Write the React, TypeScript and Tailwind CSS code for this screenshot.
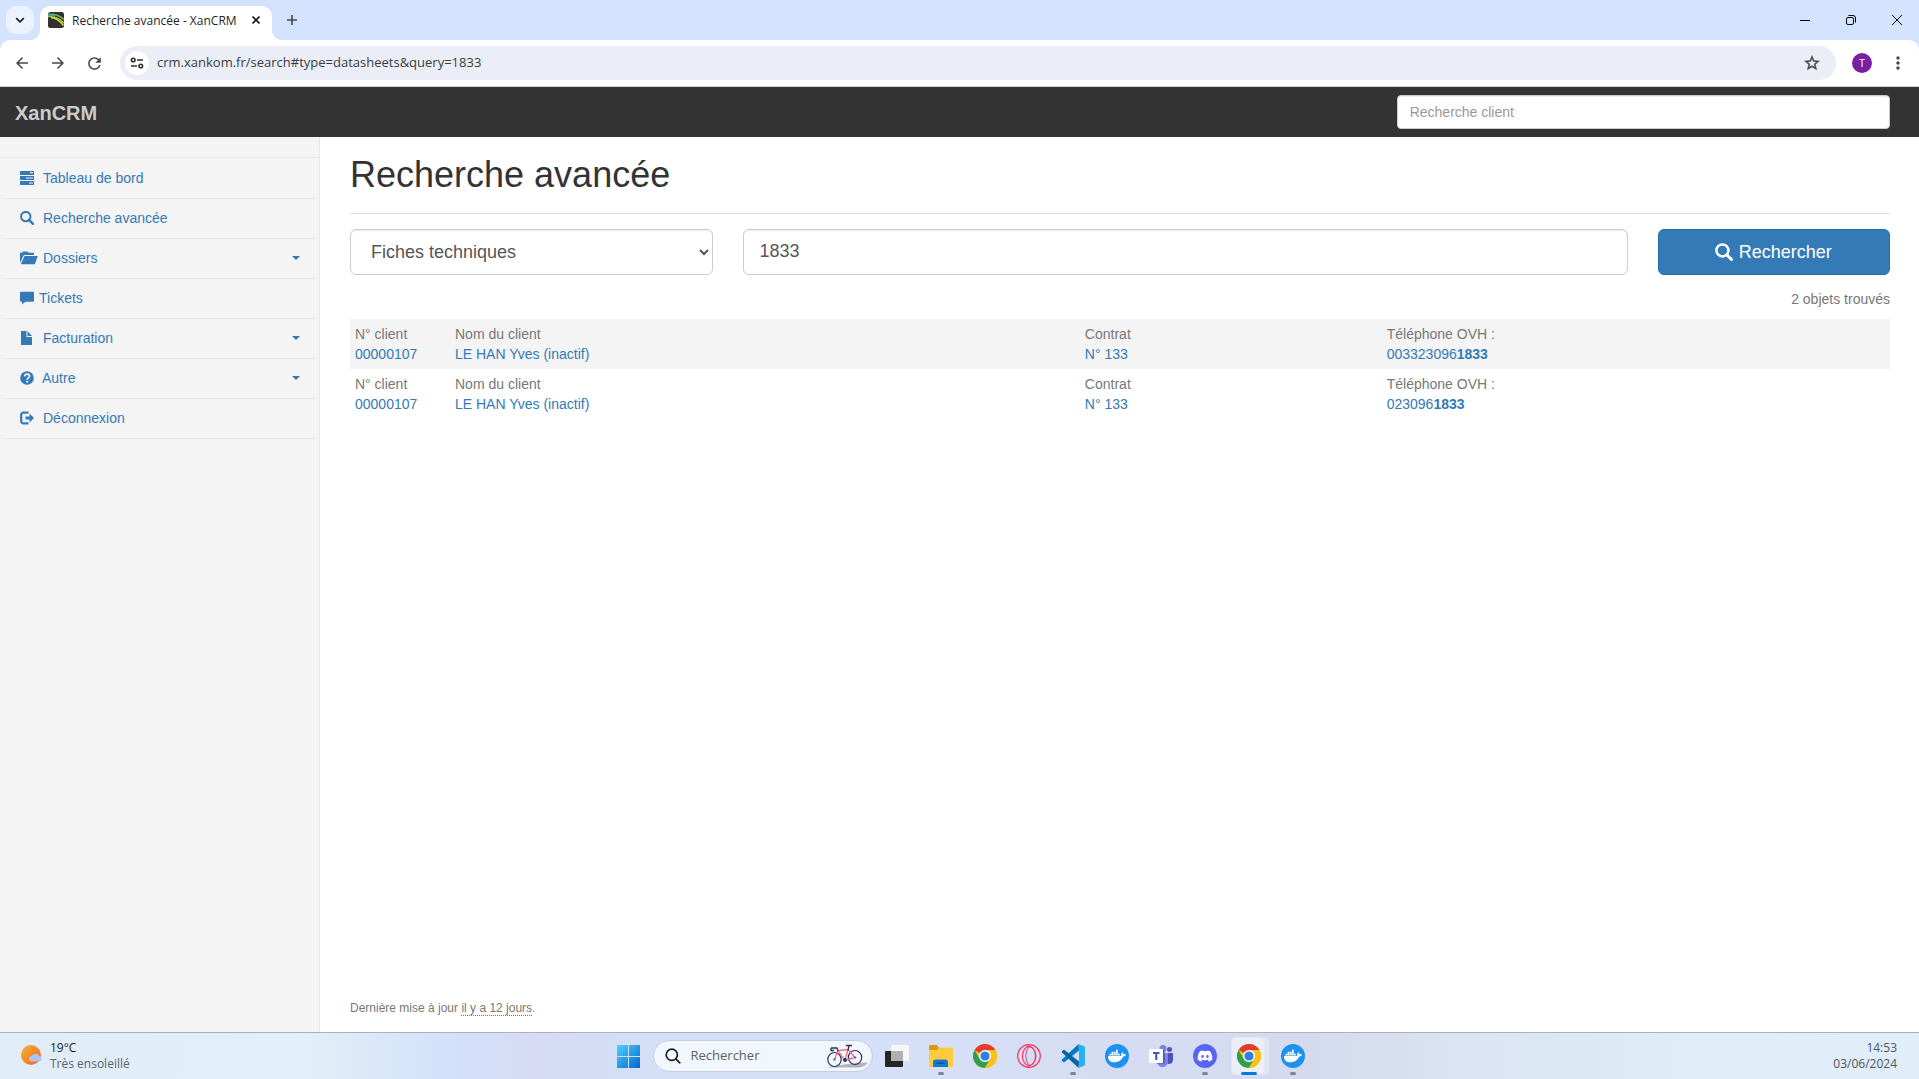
import { useState, type ReactNode } from "react";
import { FaDiscord, FaDocker } from "react-icons/fa";
import {
  MdArrowBack,
  MdArrowForward,
  MdRefresh,
  MdStarOutline,
  MdMoreVert,
} from "react-icons/md";

/* ---------- Browser chrome ---------- */

function Favicon() {
  return (
    <svg viewBox="0 0 16 16" className="size-4 shrink-0" aria-hidden="true">
      <rect width="16" height="16" rx="2.5" fill="#2f3133" />
      <g fill="none" strokeWidth="1.5">
        <path d="M0 2.5C5 1.5 11 3 16 7.5" stroke="#76b043" />
        <path d="M0 4.5C6 4 11 6 16 11" stroke="#a5c63b" />
        <path d="M3 5.5C8 6 12 9 15.5 13.5" stroke="#d8df2b" />
        <path d="M0 3.5C3 3 5 3.2 7 4" stroke="#4a9bb0" />
      </g>
    </svg>
  );
}

function TabStrip() {
  return (
    <div className="flex h-10 items-end bg-[#d3e3fd]">
      <button
        aria-label="Rechercher dans les onglets"
        className="mb-1.5 ml-1.5 flex size-7 items-center justify-center rounded-[10px] bg-[#ebf2fd]"
      >
        <svg viewBox="0 0 10 10" className="size-2.5" fill="none" stroke="#1f1f1f" strokeWidth="1.8">
          <path d="M1.2 3.2 5 6.8 8.8 3.2" />
        </svg>
      </button>
      <div className="relative ml-1.5 flex h-[34px] w-[232px] items-center rounded-t-[10px] bg-white pb-3 pl-2 pt-1.5">
        <span className="absolute -left-2.5 bottom-0 size-2.5 bg-[radial-gradient(circle_at_0_0,transparent_10px,white_10px)]" />
        <span className="absolute -right-2.5 bottom-0 size-2.5 bg-[radial-gradient(circle_at_100%_0,transparent_10px,white_10px)]" />
        <Favicon />
        <span className="ml-2 flex-1 whitespace-nowrap pt-0.5 text-[12px] text-[#1f1f1f]">
          Recherche avancée - XanCRM
        </span>
        <button aria-label="Fermer l'onglet" className="flex size-8 items-center justify-center">
          <svg viewBox="0 0 8 8" className="size-2" stroke="#1f1f1f" strokeWidth="1.6">
            <path d="M.5.5l7 7M7.5.5l-7 7" />
          </svg>
        </button>
      </div>
      <button aria-label="Nouvel onglet" className="mb-1.5 ml-1.5 flex size-7 items-center justify-center">
        <svg viewBox="0 0 10 10" className="size-2.5" stroke="#474747" strokeWidth="1.6">
          <path d="M5 0v10M0 5h10" />
        </svg>
      </button>
      <div className="ml-auto flex h-10 -mr-px">
        <button aria-label="Réduire" className="flex w-[46px] items-center justify-center">
          <svg viewBox="0 0 10 10" className="size-2.5" stroke="#000">
            <path d="M0 5.5h10" />
          </svg>
        </button>
        <button aria-label="Restaurer" className="flex w-[46px] items-center justify-center">
          <svg viewBox="0 0 10 10" className="size-2.5" fill="none" stroke="#000">
            <rect x=".5" y="2.5" width="7" height="7" rx="1.5" />
            <path d="M2.5.5H7A2.5 2.5 0 0 1 9.500 3v4.500" />
          </svg>
        </button>
        <button aria-label="Fermer" className="flex w-[46px] items-center justify-center">
          <svg viewBox="0 0 10 10" className="size-2.5" stroke="#000">
            <path d="M0 0l10 10M10 0L0 10" />
          </svg>
        </button>
      </div>
    </div>
  );
}

function ToolButton({ label, children }: { label: string; children: ReactNode }) {
  return (
    <button aria-label={label} className="flex size-9 shrink-0 items-center justify-center text-[#474747]">
      {children}
    </button>
  );
}

function Toolbar() {
  return (
    <div className="bg-[#d3e3fd]">
      <div className="flex h-[47px] items-center rounded-t-[10px] border-b border-[#d5d5d5] bg-white pl-1 pr-[3px]">
        <ToolButton label="Précédent">
          <MdArrowBack className="size-[18px]" />
        </ToolButton>
        <ToolButton label="Suivant">
          <MdArrowForward className="size-[18px]" />
        </ToolButton>
        <ToolButton label="Actualiser">
          <MdRefresh className="size-[19px]" />
        </ToolButton>
        <div className="mx-2 flex h-[34px] flex-1 items-center rounded-full bg-[#ebeef7] pl-[5px] pr-[15px]">
          <button
            aria-label="Informations sur le site"
            className="flex size-6 shrink-0 items-center justify-center rounded-full bg-white"
          >
            <svg viewBox="0 0 14 12" className="h-3 w-3.5" fill="none" stroke="#303030" strokeWidth="1.6">
              <circle cx="3.200" cy="3" r="1.800" />
              <path d="M7 3h6M1 9h6" />
              <circle cx="10.800" cy="9" r="1.800" />
            </svg>
          </button>
          <input
            aria-label="Adresse"
            className="ml-2 min-w-0 flex-1 bg-transparent text-[13px] text-[#3a3c40] outline-none"
            defaultValue="crm.xankom.fr/search#type=datasheets&query=1833"
          />
          <button aria-label="Ajouter aux favoris" className="text-[#474747]">
            <MdStarOutline className="size-[18px]" stroke="currentColor" strokeWidth="0.6" />
          </button>
        </div>
        <ToolButton label="Profil">
          <span className="flex size-5 items-center justify-center rounded-full bg-[#7b1fa2] text-[10px] text-white">
            T
          </span>
        </ToolButton>
        <ToolButton label="Menu">
          <MdMoreVert className="size-5" />
        </ToolButton>
      </div>
    </div>
  );
}

/* ---------- Icons of the application ---------- */

function Glyph({ children, wide = false }: { children: ReactNode; wide?: boolean }) {
  return (
    <svg
      viewBox={wide ? "0 0 18 14" : "0 0 14 14"}
      className={wide ? "h-3.5 w-[18px] shrink-0" : "h-3.5 w-3.5 shrink-0"}
      fill="currentColor"
      aria-hidden="true"
    >
      {children}
    </svg>
  );
}

const serverIcon = (
  <Glyph>
    <path
      fillRule="evenodd"
      d="M0 0h14v4H0zM10 1v1.200h3V1zM0 5h14v4H0zM6 6.400v1.200h7V6.400zM0 10h14v4H0zM9 11.400v1.200h4v-1.200z"
    />
  </Glyph>
);
const searchIcon = (
  <Glyph>
    <circle cx="5.800" cy="5.600" r="4.700" fill="none" stroke="currentColor" strokeWidth="2" />
    <path d="M9 8.800l4 4" stroke="currentColor" strokeWidth="2.400" strokeLinecap="round" />
  </Glyph>
);
const folderIcon = (
  <Glyph wide>
    <path d="M0 12V1.800h2L3 .5h4.500l1 1.300H14V4H4.200L3.200 5z" />
    <path d="M4.500 5H17.800l-3 8.300H.8z" />
  </Glyph>
);
const ticketIcon = (
  <Glyph>
    <path d="M1 .8h12a1 1 0 0 1 1 1v8a1 1 0 0 1-1 1H5.500L2.200 13.500V10.800H1a1 1 0 0 1-1-1v-8a1 1 0 0 1 1-1z" />
  </Glyph>
);
const fileIcon = (
  <Glyph>
    <path d="M1 0h5.500v6H12v8H1zM7.500 0 12 5H7.500z" />
  </Glyph>
);
const helpIcon = (
  <Glyph>
    <circle cx="7" cy="7" r="6.800" />
    <path d="M4.700 5.400C4.800 3.800 5.900 3.200 7.100 3.200c1.400 0 2.400.8 2.400 2 0 1.700-2.300 1.700-2.300 3.600" fill="none" stroke="#f4f4f4" strokeWidth="1.700" />
    <path d="M6.200 9.800h2v1.700h-2z" fill="#f4f4f4" />
  </Glyph>
);
const logoutIcon = (
  <Glyph>
    <path d="M8.500 1.700H3.300A2 2 0 0 0 1.200 3.700v6.600a2 2 0 0 0 2.100 2h5.200" fill="none" stroke="currentColor" strokeWidth="2.200" />
    <path d="M5.500 5.400h4V2.600L14 7l-4.500 4.400V8.600h-4z" />
  </Glyph>
);

/* ---------- Application ---------- */

function Navbar() {
  return (
    <header className="flex h-[50px] shrink-0 items-center bg-[#333333]">
      <div className="w-80 shrink-0 pl-[15px] pt-0.5">
        <a href="#accueil" className="block text-[20px] font-bold leading-5 text-[#cccccc]">
          XanCRM
        </a>
      </div>
      <div className="grid flex-1 grid-cols-3 gap-[30px] pl-[30px] pr-[29px]">
        <input
          aria-label="Recherche client"
          placeholder="Recherche client"
          className="col-start-3 h-[34px] min-w-0 rounded border border-[#cccccc] bg-white px-3 text-[14px] text-[#555555] shadow-[inset_0_1px_1px_rgba(0,0,0,0.075)] placeholder:text-[#999999]"
        />
      </div>
    </header>
  );
}

type MenuItem = { label: string; icon: ReactNode; gap: string; caret?: boolean };

const menu: MenuItem[] = [
  { label: "Tableau de bord", icon: serverIcon, gap: "gap-[9px]" },
  { label: "Recherche avancée", icon: searchIcon, gap: "gap-[9px]" },
  { label: "Dossiers", icon: folderIcon, gap: "gap-[5px]", caret: true },
  { label: "Tickets", icon: ticketIcon, gap: "gap-[5px]" },
  { label: "Facturation", icon: fileIcon, gap: "gap-[9px]", caret: true },
  { label: "Autre", icon: helpIcon, gap: "gap-2", caret: true },
  { label: "Déconnexion", icon: logoutIcon, gap: "gap-[9px]" },
];

function Sidebar() {
  return (
    <nav className="w-80 shrink-0 border-r border-[#e7e7e7] bg-[#f4f4f4] pt-5">
      <ul className="border-t border-[#e7e7e7] pt-px">
        {menu.map((item) => (
          <li key={item.label}>
            <a
              href={"#" + item.label}
              className={
                "flex h-10 items-center rounded-b border-b border-[#e7e7e7] pb-0.5 pl-5 pr-[19px] text-[14px] leading-5 text-[#337ab7] " +
                item.gap
              }
            >
              {item.icon}
              <span>{item.label}</span>
              {item.caret && (
                <svg viewBox="0 0 8 4" className="ml-auto h-1 w-2" fill="currentColor" aria-hidden="true">
                  <path d="M0 0h8L4 4z" />
                </svg>
              )}
            </a>
          </li>
        ))}
      </ul>
    </nav>
  );
}

type Result = { client: string; name: string; contract: string; prefix: string; match: string };

const results: Result[] = [
  { client: "00000107", name: "LE HAN Yves (inactif)", contract: "N° 133", prefix: "003323096", match: "1833" },
  { client: "00000107", name: "LE HAN Yves (inactif)", contract: "N° 133", prefix: "023096", match: "1833" },
];

function Cell({ label, className = "", children }: { label: string; className?: string; children: ReactNode }) {
  return (
    <td className={"p-[5px] align-top " + className}>
      <span className="block">{label}</span>
      <a href="#fiche" className="block text-[#337ab7]">
        {children}
      </a>
    </td>
  );
}

function SearchPage() {
  const [type, setType] = useState("Fiches techniques");
  const [query, setQuery] = useState("1833");
  return (
    <main className="flex flex-1 flex-col pb-3.5 pl-[30px] pr-[29px] text-[14px] leading-5 text-[#777777]">
      <h1 className="mb-[15px] border-b border-[#dddddd] pb-[18px] pt-[18px] text-[36px] leading-10 text-[#333333]">
        Recherche avancée
      </h1>
      <form className="grid grid-cols-12 gap-[30px]" onSubmit={(e) => e.preventDefault()}>
        <select
          aria-label="Type d'objet"
          value={type}
          onChange={(e) => setType(e.target.value)}
          className="col-span-3 h-[46px] rounded-md border border-[#cccccc] bg-white pl-4 text-[18px] text-[#555555] shadow-[inset_0_1px_1px_rgba(0,0,0,0.075)]"
        >
          <option>Fiches techniques</option>
        </select>
        <input
          aria-label="Recherche"
          value={query}
          onChange={(e) => setQuery(e.target.value)}
          className="col-span-7 h-[46px] min-w-0 rounded-md border border-[#cccccc] bg-white px-4 pb-0.5 text-[18px] text-[#555555] shadow-[inset_0_1px_1px_rgba(0,0,0,0.075)]"
        />
        <button className="col-span-2 flex h-[46px] items-center justify-center gap-1.5 rounded-md border border-[#2e6da4] bg-[#337ab7] pr-0.5 text-[18px] text-white">
          <svg viewBox="0 0 18 18" className="size-[18px]" fill="none" stroke="currentColor" aria-hidden="true">
            <circle cx="7.400" cy="7.400" r="6" strokeWidth="2.500" />
            <path d="M12 12l4.500 4.500" strokeWidth="3" strokeLinecap="round" />
          </svg>
          Rechercher
        </button>
      </form>
      <p className="pb-2.5 pt-3.5 text-right">2 objets trouvés</p>
      <table className="w-full table-fixed">
        <tbody>
          {results.map((r) => (
            <tr key={r.prefix} className="odd:bg-[#f4f4f4]">
              <Cell label="N° client" className="w-[100px]">
                {r.client}
              </Cell>
              <Cell label="Nom du client" className="w-[40.9%]">
                {r.name}
              </Cell>
              <Cell label="Contrat" className="w-[19.6%]">
                {r.contract}
              </Cell>
              <Cell label="Téléphone OVH :">
                {r.prefix}
                <strong>{r.match}</strong>
              </Cell>
            </tr>
          ))}
        </tbody>
      </table>
      <p className="mt-auto text-[12px]">
        Dernière mise à jour{" "}
        <abbr title="22/05/2024" className="border-b border-dotted border-[#777777] no-underline">
          il y a 12 jours
        </abbr>
        .
      </p>
    </main>
  );
}

/* ---------- Windows task bar ---------- */

function ChromeLogo() {
  return (
    <svg viewBox="0 0 24 24" className="size-6" aria-hidden="true">
      <circle cx="12" cy="12" r="12" fill="#fbc116" />
      <path d="M12 12 1.600 6A12 12 0 0 1 22.400 6H12z" fill="#e33b2e" />
      <path d="M1.600 6A12 12 0 0 0 12 24l5.200-9L12 12 6.800 15z" fill="#2da04d" />
      <path d="M12 6h10.400A12 12 0 0 1 12 24l5.200-9z" fill="#fbc116" />
      <circle cx="12" cy="12" r="6" fill="#fff" />
      <circle cx="12" cy="12" r="4.600" fill="#2f7de9" />
    </svg>
  );
}

function DockerLogo() {
  return (
    <span className="flex size-6 items-center justify-center rounded-full bg-[#1d91ee] text-white">
      <FaDocker className="h-[18px] w-[18px]" />
    </span>
  );
}

const taskViewLogo = (
  <svg viewBox="0 0 24 24" className="size-6" aria-hidden="true">
    <rect x="0" y="7" width="18" height="16" rx="1" fill="#252525" />
    <rect x="6" y="1" width="18" height="16" rx="1" fill="#f7f7f7" />
    <path d="M6 7h12v10H6z" fill="#aeb0b2" />
  </svg>
);
const explorerLogo = (
  <svg viewBox="0 0 24 24" className="size-6" aria-hidden="true">
    <path d="M0 2.500A1.500 1.500 0 0 1 1.500 1H8l2 3v4H0z" fill="#d9990f" />
    <path d="M0 6h8l2.200-2.500H23a1 1 0 0 1 1 1V22a1 1 0 0 1-1 1H1a1 1 0 0 1-1-1z" fill="#fdcb3e" />
    <path d="M4 23v-5a2.500 2.500 0 0 1 2.500-2.500h10A2.500 2.500 0 0 1 19 18v5z" fill="#1579cf" />
    <path d="M7.500 18.500h8v1.500h-8z" fill="#0b5499" />
  </svg>
);
const operaLogo = (
  <svg viewBox="0 0 24 24" className="size-6" fill="none" stroke="#f7315f" aria-hidden="true">
    <circle cx="12" cy="12" r="11.300" strokeWidth="1.200" />
    <ellipse cx="12" cy="12" rx="6.500" ry="9.600" strokeWidth="1.200" />
    <path d="M13 2.500C7.500 5 7.500 19 13 21.500M10 1.500c12 2 12 19 0 21" strokeWidth=".9" />
  </svg>
);
const codeLogo = (
  <svg viewBox="0 0 24 24" className="size-6" aria-hidden="true">
    <path d="M17.500 0 1 15.500a1 1 0 0 0 0 1.300l1.300 1.300a1 1 0 0 0 1.200 0L18 6.500z" fill="#0079c4" />
    <path d="M17.500 24 1 8.500a1 1 0 0 1 0-1.300l1.300-1.300a1 1 0 0 1 1.200 0L18 17.500z" fill="#0065a9" />
    <path d="M17.300 0 23 2.200a1.500 1.500 0 0 1 1 1.400v16.800a1.500 1.500 0 0 1-1 1.400L17.300 24c.4-.3.700-.8.700-1.500v-21c0-.7-.3-1.200-.7-1.500z" fill="#29b0f0" />
  </svg>
);
const teamsLogo = (
  <svg viewBox="0 0 24 24" className="size-6" aria-hidden="true">
    <circle cx="20.500" cy="5.500" r="2.500" fill="#4b53bc" />
    <path d="M17 9h7v7.500a4 4 0 0 1-7 2z" fill="#4b53bc" />
    <circle cx="14" cy="4.500" r="3.500" fill="#7b83eb" />
    <path d="M8 9h11v8.500a5.500 5.500 0 0 1-11 0z" fill="#7b83eb" />
    <path d="M8 6h7.500v13.500H8z" fill="#4a51b0" />
    <path d="M0 5h14v14H0z" fill="#fff" />
    <path d="M4 8h6.500v2H8.300v6H6.200v-6H4z" fill="#4b53bc" />
  </svg>
);
const discordLogo = (
  <span className="flex size-6 items-center justify-center rounded-full bg-[#5865f2] text-white">
    <FaDiscord className="size-4" />
  </span>
);

const apps: { name: string; logo: ReactNode; open?: boolean; active?: boolean }[] = [
  { name: "Vue des tâches", logo: taskViewLogo },
  { name: "Explorateur de fichiers", logo: explorerLogo, open: true },
  { name: "Google Chrome", logo: <ChromeLogo /> },
  { name: "Opera GX", logo: operaLogo },
  { name: "Visual Studio Code", logo: codeLogo, open: true },
  { name: "Docker", logo: <DockerLogo /> },
  { name: "Microsoft Teams", logo: teamsLogo },
  { name: "Discord", logo: discordLogo, open: true },
  { name: "Google Chrome (actif)", logo: <ChromeLogo />, active: true },
  { name: "Docker Desktop", logo: <DockerLogo />, open: true },
];

function Bicycle() {
  return (
    <svg viewBox="0 0 42 24" className="h-6 w-[42px] shrink-0" fill="none" aria-hidden="true">
      <path d="M0 23.500c12-2 28-5 42-5-2 3-6 5-11 5z" fill="#b4b3b6" />
      <g stroke="#2c3060" strokeWidth="1.200">
        <ellipse cx="8.500" cy="15.500" rx="6.700" ry="7" />
        <ellipse cx="29" cy="13.500" rx="6.700" ry="7" />
      </g>
      <path d="M8.500 15.500 12 6.500l10-1-3 10M12 6.500l6.500 9.500M22 5.500l7 8-9 2.500" stroke="#ef6a7c" strokeWidth="1.300" />
      <path d="M20 1.500h6M23 2l-1 4M5 4h6l1 3M5 4v2.500h3" stroke="#2c3060" strokeWidth="1.300" />
      <circle cx="19" cy="16" r="1.900" fill="#2c3060" />
      <circle cx="8.500" cy="15.500" r="1.300" fill="#777a88" />
      <circle cx="29" cy="13.500" r="1.300" fill="#777a88" />
    </svg>
  );
}

function WeatherIcon() {
  return (
    <svg viewBox="0 0 22 22" className="size-[22px] shrink-0" aria-hidden="true">
      <defs>
        <linearGradient id="sun" x1="0" y1="0" x2="1" y2="1">
          <stop offset="0" stopColor="#efb135" />
          <stop offset="1" stopColor="#f5661c" />
        </linearGradient>
      </defs>
      <circle cx="10" cy="10" r="10" fill="url(#sun)" />
      <path d="M10.500 16.500a2.600 2.600 0 0 1 .3-5.200 4 4 0 0 1 7.400-.3 2.900 2.900 0 0 1 .6 5.500z" fill="#a9c6f5" />
    </svg>
  );
}

function TaskBar() {
  return (
    <footer className="grid h-[47px] shrink-0 grid-cols-[1fr_auto_1fr] items-center border-t border-[#a9b1bd] bg-[linear-gradient(90deg,#e0edf6_0%,#e2eef8_16%,#d3e2fb_23%,#d6daf4_28%,#d3e0f8_35%,#d6dff6_50%,#d5daee_68%,#dae4f2_76%,#e0ecf8_88%,#e1edf9_100%)]">
      <button className="ml-[21px] flex items-center gap-[7px] justify-self-start text-left text-[12px] leading-4 text-[#5c636b]">
        <WeatherIcon />
        <span>
          <span className="block text-[#1b1b1b]">19°C</span>
          <span className="block">Très ensoleillé</span>
        </span>
      </button>
      <div className="flex h-[46px] items-center">
        <button aria-label="Démarrer" className="flex h-full w-11 items-center justify-center pl-1">
          <svg viewBox="0 0 23 23" className="size-[23px]" aria-hidden="true">
            <defs>
              <linearGradient id="win" gradientUnits="userSpaceOnUse" x1="0" y1="0" x2="23" y2="23">
                <stop offset="0" stopColor="#4fd0ff" />
                <stop offset="1" stopColor="#0067ce" />
              </linearGradient>
            </defs>
            <path d="M0 0h11v11H0zM12 0h11v11H12zM0 12h11v11H0zM12 12h11v11H12z" fill="url(#win)" />
          </svg>
        </button>
        <label className="ml-1 mr-0.5 flex h-8 w-[220px] items-center rounded-full border border-[#c5cde0] bg-[#f2f6fd] pl-[11px] pr-1">
          <svg viewBox="0 0 16 16" className="size-4 shrink-0" fill="none" stroke="#1f1f1f" strokeWidth="1.700" aria-hidden="true">
            <circle cx="6.800" cy="6.800" r="5.600" />
            <path d="M10.800 10.800l4.500 4.500" />
          </svg>
          <input
            aria-label="Rechercher"
            placeholder="Rechercher"
            className="ml-2.5 min-w-0 flex-1 bg-transparent text-[13px] outline-none placeholder:text-[#5c5f66]"
          />
          <Bicycle />
        </label>
        {apps.map((app) => (
          <button key={app.name} aria-label={app.name} className="relative flex h-full w-11 items-center justify-center">
            {app.active && (
              <>
                <span className="absolute bottom-1 left-2 right-0.5 top-1 rounded border border-[#e6e9f4] bg-[#e0e5f3]" />
                <span className="absolute bottom-1 left-1 right-1.5 top-1 rounded border border-[#e2e6f2] bg-[#ebeffa]" />
              </>
            )}
            <span className="relative">{app.logo}</span>
            {app.open && <span className="absolute bottom-1 h-[3px] w-1.5 rounded-full bg-[#7f848e]" />}
            {app.active && <span className="absolute bottom-1 h-[3px] w-4 rounded-full bg-[#0a78d4]" />}
          </button>
        ))}
      </div>
      <button className="mr-[22px] justify-self-end text-right text-[12px] leading-4 text-[#4f565e]">
        <span className="block">14:53</span>
        <span className="block">03/06/2024</span>
      </button>
    </footer>
  );
}

export default function App() {
  return (
    <div className="flex min-h-screen flex-col bg-white font-['Open_Sans','Noto_Sans',sans-serif]">
      <TabStrip />
      <Toolbar />
      <div className="flex flex-1 flex-col font-['Liberation_Sans',Arial,sans-serif]">
        <Navbar />
        <div className="flex flex-1">
          <Sidebar />
          <SearchPage />
        </div>
      </div>
      <TaskBar />
    </div>
  );
}
